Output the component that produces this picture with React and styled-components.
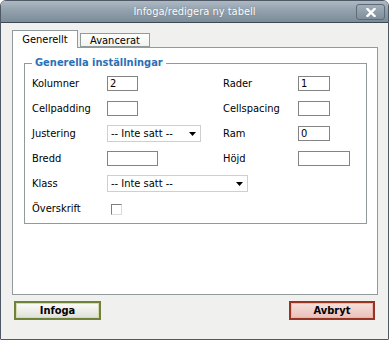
import React from 'react';
import styled, { createGlobalStyle } from 'styled-components';

const FONT = `"DejaVu Sans Condensed", "Liberation Sans", Arial, sans-serif`;

const Global = createGlobalStyle`
  html, body { margin: 0; padding: 0; background: #ffffff; }
  body { font-family: ${FONT}; font-size: 11px; color: #000; }
  * { box-sizing: border-box; }
`;

const Window = styled.div`
  width: 389px;
  height: 340px;
  border: 1px solid #4e5965;
  border-radius: 6px 6px 1px 1px;
  background: #f0f0ee;
  display: flex;
  flex-direction: column;
  overflow: hidden;
`;

const TitleBar = styled.div`
  height: 22px;
  flex: none;
  display: grid;
  grid-template-columns: 1fr auto 1fr;
  align-items: start;
  background: linear-gradient(#adb9c4 0%, #93a1ad 45%, #7b8b98 100%);
  border-bottom: 1px solid #3e4852;
`;

const Title = styled.div`
  grid-column: 2;
  line-height: 21px;
  color: #ffffff;
  font-size: 11px;
  text-shadow: 0 0 1px rgba(60, 70, 80, 0.5);
  white-space: nowrap;
`;

const CloseButton = styled.div`
  grid-column: 3;
  justify-self: end;
  width: 29px;
  height: 16px;
  margin: 3px 3px 0 0;
  border: 1px solid #5d6b77;
  border-radius: 3px;
  background: linear-gradient(#a2afba, #7e8e9b);
  display: flex;
  align-items: center;
  justify-content: center;
`;

const Content = styled.div`
  flex: 1;
  padding: 7px 10px 0 11px;
  display: flex;
  flex-direction: column;
`;

const Tabs = styled.div`
  display: flex;
  align-items: flex-end;
  gap: 2px;
  height: 17px;
  position: relative;
  z-index: 1;
`;

const Tab = styled.div`
  width: ${p => p.$w}px;
  height: ${p => (p.$active ? 18 : 14)}px;
  margin-bottom: ${p => (p.$active ? -1 : 0)}px;
  border: 1px solid #919b9c;
  border-bottom: ${p => (p.$active ? 'none' : '1px solid #919b9c')};
  background: ${p => (p.$active ? '#ffffff' : 'linear-gradient(#ffffff, #f2f2f0)')};
  display: flex;
  justify-content: center;
  align-items: ${p => (p.$active ? 'flex-start' : 'center')};
  padding-top: ${p => (p.$active ? 2 : 0)}px;
  line-height: 13px;
  font-size: 11px;
`;

const Panel = styled.div`
  width: 366px;
  height: 248px;
  border: 1px solid #919b9c;
  background: #ffffff;
  padding: 8px 10px 0 11px;
`;

const Fieldset = styled.fieldset`
  margin: 0;
  border: 1px solid #919b9c;
  padding: 0 7px 2px 7px;
  min-width: 0;
`;

const Legend = styled.legend`
  padding: 0 3px;
  margin: 0;
  color: #2b6fb6;
  font-weight: bold;
  font-size: 11px;
  line-height: 14px;
`;

const Grid = styled.div`
  display: grid;
  grid-template-columns: 75px 116px 75px 1fr;
  grid-auto-rows: 25px;
  align-items: center;
  margin-top: 1px;
`;

const Label = styled.label`
  font-size: 11px;
  white-space: nowrap;
`;

const Input = styled.input`
  width: ${p => p.$w}px;
  height: 15px;
  border: 1px solid #848484;
  padding: 0 2px;
  margin: 0;
  font-family: ${FONT};
  font-size: 11px;
  line-height: 13px;
  color: #000;
  background: #fff;
  outline: none;
`;

const SelectWrap = styled.div`
  position: relative;
  width: ${p => p.$w}px;
  height: 17px;
  grid-column: ${p => (p.$span ? 'span 2' : 'auto')};
`;

const Select = styled.select`
  appearance: none;
  -webkit-appearance: none;
  width: 100%;
  height: 100%;
  margin: 0;
  border: 1px solid #cfcfcf;
  border-radius: 0;
  background: #fff;
  padding: 0 0 0 3px;
  font-family: ${FONT};
  font-size: 11px;
  color: #000;
  outline: none;
`;

const Arrow = styled.svg`
  position: absolute;
  right: 5px;
  top: 7px;
  pointer-events: none;
`;

const Check = styled.input`
  appearance: none;
  -webkit-appearance: none;
  width: 11px;
  height: 11px;
  margin: 1px 0 0 4px;
  border-style: solid;
  border-width: 1px;
  border-color: #7e7e7e #dcdcdc #dcdcdc #7e7e7e;
  background: #fff;
`;

const ButtonRow = styled.div`
  display: flex;
  justify-content: space-between;
  margin-top: 6px;
  padding: 0 3px 0 2px;
  width: 366px;
`;

const Button = styled.button`
  width: ${p => p.$w}px;
  height: 19px;
  margin: 0;
  padding: 0;
  font-family: ${FONT};
  font-size: 11px;
  font-weight: bold;
  color: #000;
  border: 2px solid ${p => (p.$variant === 'cancel' ? '#983424' : '#6f823a')};
  box-shadow: inset 0 0 0 1px ${p => (p.$variant === 'cancel' ? '#e7b8ae' : '#d4dbb3')};
  background: ${p =>
    p.$variant === 'cancel'
      ? 'linear-gradient(#f7e0db, #e9c1b9)'
      : 'linear-gradient(#fbfbf9, #e0e0da)'};
  line-height: 15px;
`;

function Sel({ w, span }) {
  return (
    <SelectWrap $w={w} $span={span}>
      <Select defaultValue="">
        <option value="">-- Inte satt --</option>
      </Select>
      <Arrow width="7" height="4" viewBox="0 0 7 4">
        <path d="M0 0 H7 L3.5 4 Z" fill="#000" />
      </Arrow>
    </SelectWrap>
  );
}

export default function App() {
  return (
    <>
      <Global />
      <Window>
        <TitleBar>
          <Title>Infoga/redigera ny tabell</Title>
          <CloseButton>
            <svg width="10" height="9" viewBox="0 0 10 9">
              <path d="M1.5 1 L8.5 8 M8.5 1 L1.5 8" stroke="#fff" strokeWidth="2.4" strokeLinecap="square" />
            </svg>
          </CloseButton>
        </TitleBar>
        <Content>
          <Tabs>
            <Tab $active $w={66}>Generellt</Tab>
            <Tab $w={70}>Avancerat</Tab>
          </Tabs>
          <Panel>
            <Fieldset>
              <Legend>Generella inställningar</Legend>
              <Grid>
                <Label>Kolumner</Label>
                <Input $w={31} defaultValue="2" />
                <Label>Rader</Label>
                <Input $w={32} defaultValue="1" />

                <Label>Cellpadding</Label>
                <Input $w={31} defaultValue="" />
                <Label>Cellspacing</Label>
                <Input $w={32} defaultValue="" />

                <Label>Justering</Label>
                <Sel w={94} />
                <Label>Ram</Label>
                <Input $w={32} defaultValue="0" />

                <Label>Bredd</Label>
                <Input $w={51} defaultValue="" />
                <Label>Höjd</Label>
                <Input $w={52} defaultValue="" />

                <Label>Klass</Label>
                <Sel w={141} span />
                <span />

                <Label>Överskrift</Label>
                <Check type="checkbox" />
              </Grid>
            </Fieldset>
          </Panel>
          <ButtonRow>
            <Button $w={87}>Infoga</Button>
            <Button $w={86} $variant="cancel">Avbryt</Button>
          </ButtonRow>
        </Content>
      </Window>
    </>
  );
}
